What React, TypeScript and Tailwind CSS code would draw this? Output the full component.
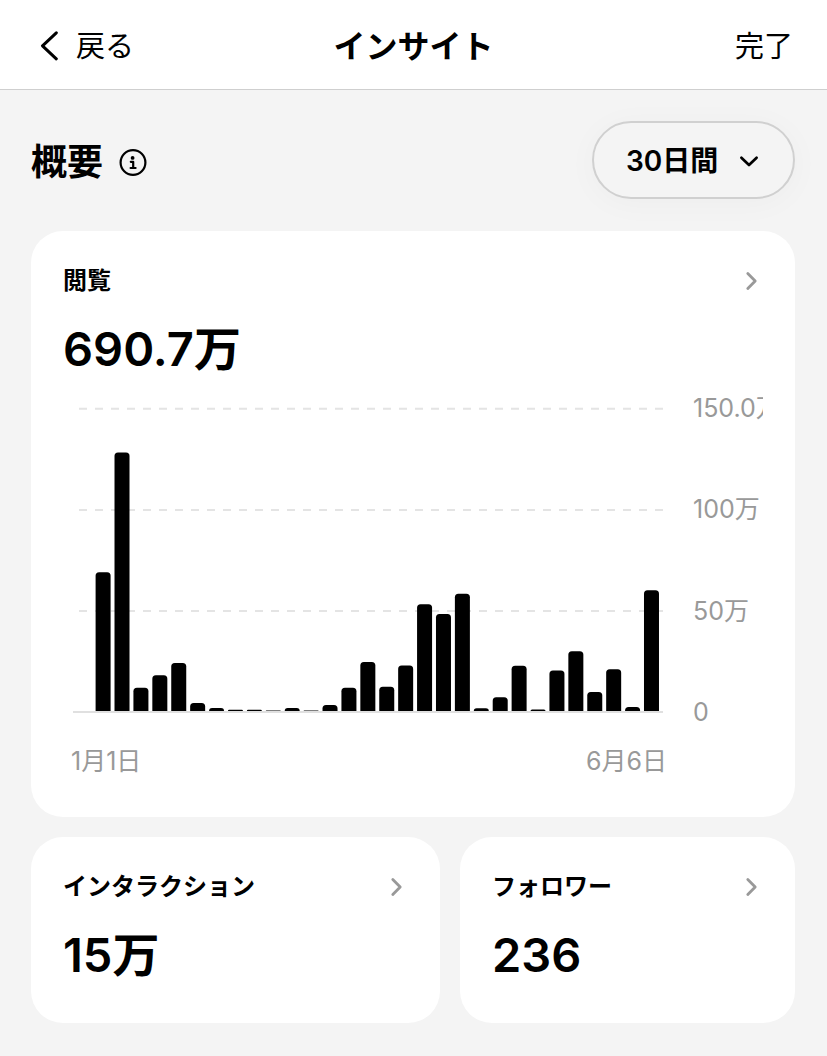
import type { ReactNode } from 'react';

// Views per day, in units of 10,000
const VIEWS = [
    68.5, 127.5, 11.5, 17.6, 23.7, 4, 1.5, 0.6, 0.6, 0.3,
    1.5, 0.3, 3, 11.5, 24.2, 12, 22.5, 52.7, 47.9, 57.8,
    1.4, 6.8, 22.3, 0.8, 20, 29.5, 9.4, 20.6, 2, 59.6,
];

const Y_LABELS = ['150.0万', '100万', '50万', '0'];

function ChevronRight() {
    return (
        <svg viewBox="0 0 24 24" className="size-6 shrink-0 text-[#999999]" fill="none" stroke="currentColor" strokeWidth="2.8" strokeLinecap="round" strokeLinejoin="round" aria-hidden="true">
            <path d="M8.8 4.5 16.2 12 8.8 19.5" />
        </svg>
    );
}

function InfoIcon() {
    return (
        <svg viewBox="0 0 28 28" className="size-7" fill="none" stroke="currentColor" strokeWidth="2.2" aria-hidden="true">
            <circle cx="14" cy="14.5" r="12.4" />
            <circle cx="13.6" cy="9.9" r="1.9" fill="currentColor" stroke="none" />
            <path d="M11.8 13.8h2.4v6.2M11.6 20h5" strokeLinecap="round" strokeLinejoin="round" />
        </svg>
    );
}

function ViewsChart() {
    const baseline = 321;

    // Only the top corners of a bar are rounded
    const barPath = (value: number, index: number) => {
        const x = 32.6 + index * 18.91;
        const height = value * 2.027;
        const r = Math.min(3.5, height);
        return `M${x} ${baseline}v${-(height - r)}q0 ${-r} ${r} ${-r}h${15 - r * 2}q${r} 0 ${r} ${r}v${height - r}z`;
    };

    return (
        <svg viewBox="0 0 630 340" className="block min-w-0 flex-1" role="img" aria-label="閲覧">
            {[18.7, 120, 221].map((y) => (
                <line key={y} x1="16" x2="600" y1={y} y2={y} stroke="#e4e4e4" strokeWidth="2" strokeDasharray="8 8" />
            ))}
            <line x1="10" x2="600" y1="322" y2="322" stroke="#e0e0e0" strokeWidth="2" />
            {VIEWS.map((value, index) => (
                <path key={index} d={barPath(value, index)} fill="#000" />
            ))}
        </svg>
    );
}

function StatCard({ title, value, className, children }: { title: string; value: string; className: string; children?: ReactNode }) {
    return (
        <section className={`rounded-[32px] bg-white px-8 pt-8 ${className}`}>
            <a href="#" className="flex items-center justify-between">
                <h3 className="text-2xl/9 font-semibold">{title}</h3>
                <ChevronRight />
            </a>
            <p className="mt-[22px] text-[47px]/[56px] font-semibold">{value}</p>
            {children}
        </section>
    );
}

export default function App() {
    return (
        <div className="min-h-screen bg-[#f4f4f4] font-['Inter','Noto_Sans_CJK_JP',sans-serif] text-black" lang="ja">
            <header className="grid h-[90px] grid-cols-[1fr_auto_1fr] items-center border-b border-[#cfcfcf] bg-white px-[34px] pt-1">
                <button type="button" className="flex items-center gap-3.5 justify-self-start text-[29px]/10">
                    <svg viewBox="0 0 28 32" className="h-8 w-7" fill="none" stroke="currentColor" strokeWidth="3" strokeLinecap="round" strokeLinejoin="round" aria-hidden="true">
                        <path d="M22.3 1.8 8.5 14.8 22.3 27.8" />
                    </svg>
                    戻る
                </button>
                <h1 className="text-[32px]/10 font-semibold">インサイト</h1>
                <button type="button" className="justify-self-end text-[29px]/10">完了</button>
            </header>

            <main className="pt-[31px] pr-8 pb-8 pl-[31px]">
                <div className="flex items-center justify-between">
                    <div className="flex items-center gap-4 pt-1">
                        <h2 className="text-4xl/[48px] font-semibold">概要</h2>
                        <button type="button" aria-label="概要">
                            <InfoIcon />
                        </button>
                    </div>
                    <div className="relative">
                        <select aria-label="期間" defaultValue="30" className="h-[78px] w-[203px] appearance-none rounded-full border-2 border-[#d0d0d0] bg-[#f4f4f4] pt-0.5 pl-8 text-[28px]/10 font-semibold shadow-[0_4px_32px_rgba(0,0,0,0.03)]">
                            <option value="7">7日間</option>
                            <option value="30">30日間</option>
                            <option value="90">90日間</option>
                        </select>
                        <svg viewBox="0 0 24 24" className="pointer-events-none absolute top-7 right-[34px] size-6" fill="none" stroke="currentColor" strokeWidth="2.7" strokeLinecap="round" strokeLinejoin="round" aria-hidden="true">
                            <path d="M4.4 8.7 12 16l7.6-7.3" />
                        </svg>
                    </div>
                </div>

                <StatCard title="閲覧" value="690.7万" className="mt-8 pb-[38px]">
                    <div className="mt-[13px] flex">
                        <ViewsChart />
                        <div className="flex w-[70px] shrink-0 flex-col justify-between overflow-hidden text-[25px]/9 whitespace-nowrap text-[#999999]">
                            {Y_LABELS.map((label) => (
                                <span key={label}>{label}</span>
                            ))}
                        </div>
                    </div>
                    <div className="mt-[13px] flex justify-between pr-24 pl-2 text-[25px]/9 text-[#999999]">
                        <span>1月1日</span>
                        <span>6月6日</span>
                    </div>
                </StatCard>

                <div className="mt-5 grid grid-cols-[409fr_335fr] gap-5">
                    <StatCard title="インタラクション" value="15万" className="pb-10" />
                    <StatCard title="フォロワー" value="236" className="pb-10" />
                </div>
            </main>
        </div>
    );
}
